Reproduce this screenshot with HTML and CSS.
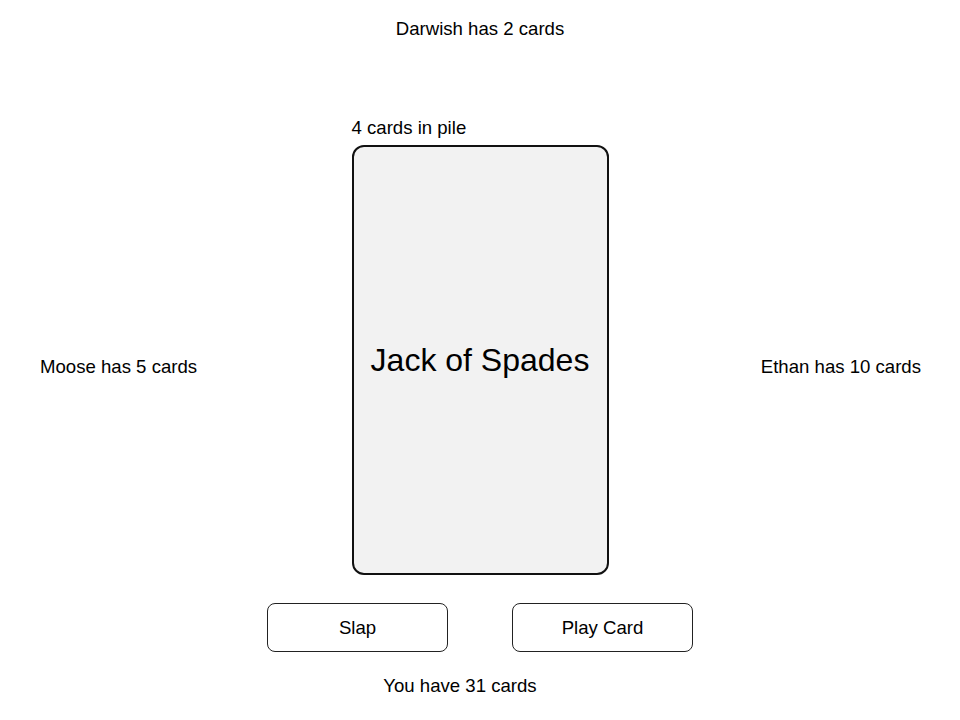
FILE: index.html
```html
<!DOCTYPE html>
<html lang="en">
<head>
    <meta charset="UTF-8">
    <meta name="viewport" content="width=device-width, initial-scale=1.0">
    <title>Slap Jack</title>
    <link rel="stylesheet" href="styles.css">
</head>
<body>

    <div class="player top">Darwish has 2 cards</div>

    <div class="table">
        <div class="pile-count">4 cards in pile</div>
        <div class="player side left">Moose has 5 cards</div>
        <div class="card">Jack of Spades</div>
        <div class="player side right">Ethan has 10 cards</div>
    </div>

    <div class="controls">
        <button class="button">Slap</button>
        <button class="button">Play Card</button>
    </div>

    <div class="player you">You have 31 cards</div>

</body>
</html>
```

FILE: styles.css
```css
body {
    margin: 0;
    font-family: "Liberation Sans", Arial, sans-serif;
    font-size: 18.6px;
    line-height: 20px;
    color: #000;
    background: #fff;
}
.player.top {
    text-align: center;
    padding-top: 19px;
}
.table {
    display: grid;
    grid-template-columns: 1fr 256px 1fr;
    grid-template-rows: auto 430px;
    padding: 0 39px 0 40px;
    margin-top: 79px;
}
.pile-count {
    grid-column: 2;
    grid-row: 1;
    margin-bottom: 7px;
    margin-left: -1px;
}
.side {
    grid-row: 2;
    align-self: center;
    margin-top: 14px;
}
.side.left { grid-column: 1; }
.side.right { grid-column: 3; text-align: right; }
.card {
    grid-column: 2;
    grid-row: 2;
    margin-left: -1px;
    box-sizing: border-box;
    border: 2px solid #111;
    border-radius: 12px;
    background-color: #f2f2f2;
    display: flex;
    align-items: center;
    justify-content: center;
    font-size: 32px;
    line-height: 36px;
}
.controls {
    display: flex;
    justify-content: center;
    gap: 64px;
    margin-top: 28px;
}
.button {
    width: 181px;
    height: 49px;
    border: 1px solid #222;
    border-radius: 8px;
    background: #fff;
    font-family: inherit;
    font-size: 18.6px;
    color: #000;
    cursor: pointer;
}
.player.you {
    text-align: center;
    margin-top: 24px;
    padding-right: 40px;
}
```
